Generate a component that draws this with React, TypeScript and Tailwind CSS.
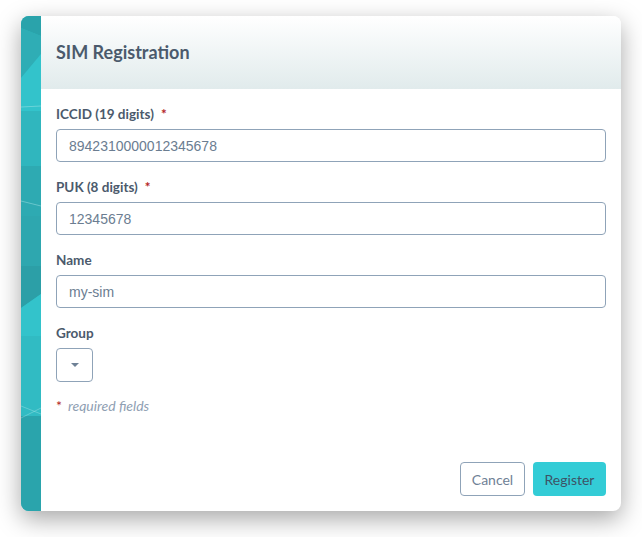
import React, { useState } from 'react';

const Stripe: React.FC = () => (
  <svg className="block h-full w-full" viewBox="0 0 20 495" preserveAspectRatio="none">
    <rect x="0" y="0" width="20" height="495" fill="#2db7bf" />
    <polygon points="0,0 20,0 20,20 0,12" fill="#2aa3ab" />
    <polygon points="0,12 20,20 20,38 0,62" fill="#2fadb5" />
    <polygon points="0,62 20,38 20,95 0,95" fill="#33c3cb" />
    <polygon points="0,95 20,95 20,150 0,150" fill="#30b6be" />
    <polygon points="0,150 20,150 20,200 0,200" fill="#2eaab2" />
    <polygon points="0,200 20,200 20,250 0,250" fill="#2ea7af" />
    <polygon points="0,250 20,250 20,278 0,292" fill="#2c9fa7" />
    <polygon points="0,292 20,278 20,320 0,320" fill="#33c3cb" />
    <polygon points="0,320 20,320 20,400 0,400" fill="#31bbc3" />
    <polygon points="0,400 20,400 20,495 0,495" fill="#2aa4ac" />
    <line x1="0" y1="91" x2="20" y2="90" stroke="#a8e6ea" strokeWidth="0.6" opacity="0.8" />
    <line x1="0" y1="185" x2="20" y2="190" stroke="#a8e6ea" strokeWidth="0.6" opacity="0.8" />
    <line x1="0" y1="390" x2="20" y2="398" stroke="#a8e6ea" strokeWidth="0.6" opacity="0.7" />
    <line x1="0" y1="402" x2="20" y2="392" stroke="#a8e6ea" strokeWidth="0.6" opacity="0.7" />
  </svg>
);

const Label: React.FC<{ text: string; required?: boolean }> = ({ text, required }) => (
  <label className="block text-[13.5px] leading-4 font-bold text-[#4b5a6c]">
    {text}
    {required && <span className="ml-[7px] text-[#b32424]">*</span>}
  </label>
);

export default function App() {
  const [iccid, setIccid] = useState('');
  const [puk, setPuk] = useState('');
  const [name, setName] = useState('');

  const inputCls =
    "block w-full h-[33px] rounded-[4px] border border-[#8fa3b8] bg-white px-[12px] text-[14px] text-[#4b5a6c] placeholder-[#6b7d91] outline-none font-['Liberation_Sans',Arial,sans-serif]";

  return (
    <div className="min-h-screen bg-white pt-4 pl-[21px] font-['Lato','Noto_Sans',sans-serif]">
      <div className="flex h-[495px] w-[600px] overflow-hidden rounded-[8px] bg-white shadow-[0_8px_24px_rgba(0,0,0,0.35)]">
        <div className="w-5 shrink-0">
          <Stripe />
        </div>
        <div className="flex flex-1 flex-col">
          <div className="flex h-[73px] items-center bg-gradient-to-b from-white to-[#e1ebec] px-[15px]">
            <h1 className="text-[18px] font-bold text-[#4b5a6c]">SIM Registration</h1>
          </div>
          <div className="flex flex-1 flex-col px-[15px] pt-[17px] pb-[15px]">
            <Label text="ICCID (19 digits)" required />
            <input
              className={`${inputCls} mt-[7px] mb-[17px]`}
              placeholder="8942310000012345678"
              value={iccid}
              onChange={(e) => setIccid(e.target.value)}
            />
            <Label text="PUK (8 digits)" required />
            <input
              className={`${inputCls} mt-[7px] mb-[17px]`}
              placeholder="12345678"
              value={puk}
              onChange={(e) => setPuk(e.target.value)}
            />
            <Label text="Name" />
            <input
              className={`${inputCls} mt-[7px] mb-[17px]`}
              placeholder="my-sim"
              value={name}
              onChange={(e) => setName(e.target.value)}
            />
            <Label text="Group" />
            <button className="mt-[7px] flex h-[34px] w-[37px] items-center justify-center rounded-[4px] border border-[#8fa3b8] bg-white">
              <svg width="8" height="4" viewBox="0 0 8 4">
                <polygon points="0,0 8,0 4,4" fill="#6f8196" />
              </svg>
            </button>
            <p className="mt-4 text-[14px] leading-4 italic text-[#8fa0b3]">
              <span className="mr-[6px] not-italic text-[#b32424]">*</span>required fields
            </p>
            <div className="mt-auto flex justify-end gap-2">
              <button className="h-[34px] w-[65px] rounded-[4px] border border-[#8fa3b8] bg-white text-[14px] text-[#6f8196]">
                Cancel
              </button>
              <button className="h-[34px] w-[73px] rounded-[4px] bg-[#33ccd6] text-[14px] text-[#3d5366]">
                Register
              </button>
            </div>
          </div>
        </div>
      </div>
    </div>
  );
}
